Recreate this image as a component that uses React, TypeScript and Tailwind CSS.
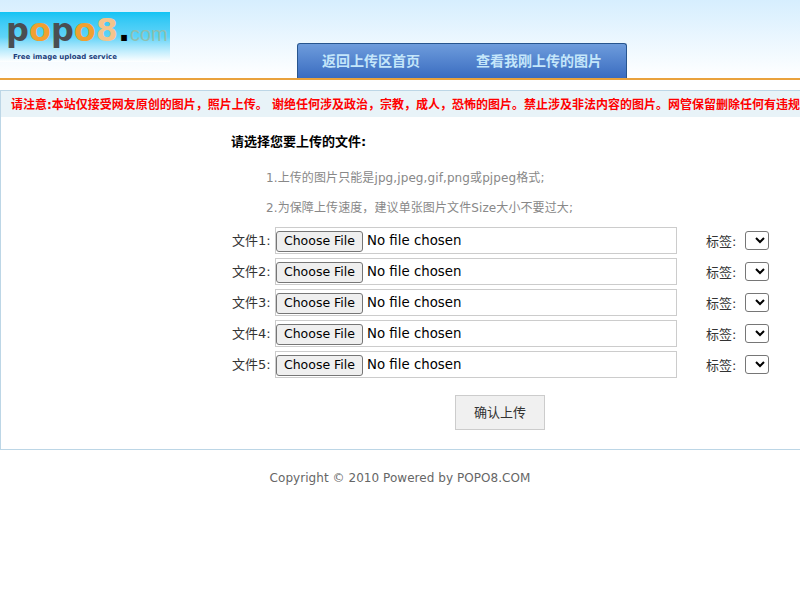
import React from "react";

const cjk = "font-['DejaVu_Sans','Noto_Sans_CJK_SC',sans-serif]";

function FileRow({ n }: { n: number }) {
    return (
        <div className="flex items-center h-[27px] mb-1">
            <span className="w-[44px] pl-[1px] text-[13px] text-[#333]">文件{n}:</span>
            <div className="w-[402px] h-[27px] border border-[#ccc] flex items-center">
                <input
                    type="file"
                    className="relative top-[1px] text-[13.33px] text-black w-[390px] font-['DejaVu_Sans',sans-serif] file:w-[87px] file:h-[21px] file:mr-[4px] file:bg-[#efefef] file:border file:border-[#767676] file:rounded-[3px] file:text-[12.5px] file:text-black"
                />
            </div>
            <span className="ml-[29px] w-[39px] text-[13px] text-[#333] relative top-[1px]">标签:</span>
            <select className="w-[24px] h-[19px] border border-[#767676] rounded-[3px] bg-white"></select>
        </div>
    );
}

export default function App() {
    return (
        <div className={`w-[800px] h-[600px] overflow-hidden bg-white ${cjk}`}>
            {/* header */}
            <div className="h-[80px] border-b-2 border-[#e9a23c] bg-gradient-to-b from-[#d6eefe] to-white flex">
                <div className="w-[170px] h-[50px] mt-3 bg-gradient-to-b from-[#0fc4f4] via-[#5fd4f8] to-white relative">
                    <span className="absolute left-[6px] top-0 text-[32px] font-bold leading-[36px] font-['DejaVu_Sans',sans-serif] whitespace-nowrap">
                        <span className="text-[#4a4e52]">p</span>
                        <span className="text-[#f0a030]">o</span>
                        <span className="text-[#4a4e52]">p</span>
                        <span className="text-[#f0a030]">o</span>
                        <span className="text-[#f4c48c]">8</span>
                        <span className="text-black">.</span>
                    </span>
                    <span className="absolute left-[130px] top-[8px] text-[20px] leading-[28px] text-[#8fbfb0] font-['Liberation_Sans',sans-serif]">com</span>
                    <span className="absolute left-[13px] top-[40px] text-[7px] leading-[10px] font-bold text-[#1c3f7c] font-['DejaVu_Sans',sans-serif] whitespace-nowrap">Free image upload service</span>
                </div>
                <div className="ml-[127px] mt-[43px] w-[330px] h-[35px] border border-b-0 border-[#27558f] rounded-t-[3px] bg-gradient-to-b from-[#6e9cdc] to-[#3a6cc0] flex items-center text-[14px] font-bold text-[#c4e6fa]">
                    <span className="ml-[24px] w-[154px]">返回上传区首页</span>
                    <span>查看我刚上传的图片</span>
                </div>
            </div>

            {/* main panel */}
            <div className="mt-[10px] w-[820px] h-[360px] border border-[#bcd6e6]">
                <div className="h-[26px] bg-[#e8f3f8] pl-[10px] text-[12px] font-bold leading-[28px] text-[#f00] whitespace-nowrap">
                    请注意:本站仅接受网友原创的图片，照片上传。 谢绝任何涉及政治，宗教，成人，恐怖的图片。禁止涉及非法内容的图片。网管保留删除任何有违规内容图片的权利。
                </div>
                <div className="pl-[230px] pt-[15px]">
                    <div className="text-[13px] font-bold leading-[20px] text-black">请选择您要上传的文件:</div>
                    <div className="pl-[35px] mt-[11px] text-[12px] leading-[30px] text-[#888] tracking-[0.1px]">
                        <p>1.上传的图片只能是jpg,jpeg,gif,png或pjpeg格式;</p>
                        <p>2.为保障上传速度，建议单张图片文件Size大小不要过大;</p>
                    </div>
                    <div className="mt-[4px]">
                        {[1, 2, 3, 4, 5].map((n) => (
                            <FileRow key={n} n={n} />
                        ))}
                    </div>
                    <button className="block ml-[224px] mt-[17px] w-[90px] h-[35px] border border-[#ccc] bg-[#f0f0f0] text-[13px] text-[#333]">确认上传</button>
                </div>
            </div>

            <div className="mt-[19px] text-center text-[12px] leading-[18px] text-[#666] tracking-[0.05px]">Copyright © 2010 Powered by POPO8.COM</div>
        </div>
    );
}
